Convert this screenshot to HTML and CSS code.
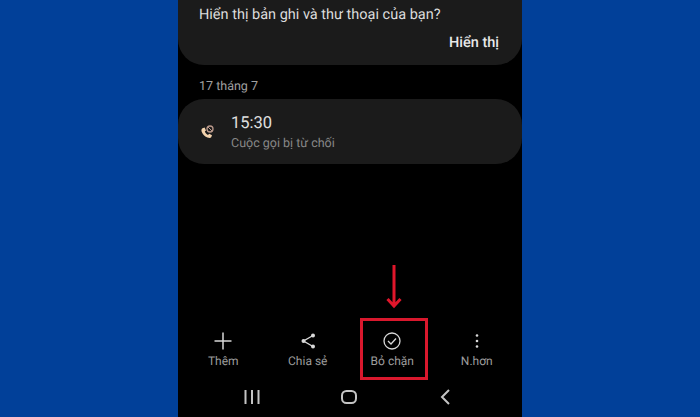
FILE: index.html
```html
<!DOCTYPE html>
<html>
	<head>
		<meta charset="UTF-8">
		<title></title>
		<link rel="stylesheet" href="styles.css">
	</head>
	<body>
		<div class="phone">
			<div class="card prompt">
				<p class="question">Hiển thị bản ghi và thư thoại của bạn?</p>
				<p class="action">Hiển thị</p>
			</div>
			<p class="date">17 tháng 7</p>
			<div class="card call">
				<svg class="call-icon" width="18" height="18" viewBox="0 0 18 18">
					<path d="M4.500 5.200 6.600 4.400 8 7.400 6.800 8.600C7.400 10.200 8.400 11.200 10 11.900L11.200 10.700 14 12.200 13.200 14.300C12.600 15.200 11 15.200 9.400 14.500 6.400 13.200 4.400 11 3.600 8.400 3.200 7 3.600 5.800 4.500 5.200Z" fill="#f3d3ad"/>
					<circle cx="12" cy="6" r="3" fill="none" stroke="#b9988a" stroke-width="1.300"/>
					<path d="M10 4 14 8" stroke="#b9988a" stroke-width="1"/>
				</svg>
				<div>
					<p class="time">15:30</p>
					<p class="status">Cuộc gọi bị từ chối</p>
				</div>
			</div>
			<div class="spacer"></div>
			<ul class="toolbar">
				<li>
					<svg width="24" height="24" viewBox="0 0 24 24"><path d="M12 3.500V20.500M3.500 12H20.500" stroke="#d8d8d8" stroke-width="1.500"/></svg>
					<span>Thêm</span>
				</li>
				<li>
					<svg width="24" height="24" viewBox="0 0 24 24">
						<path d="M17 6.500 7.500 12 17 17.500" fill="none" stroke="#d8d8d8" stroke-width="1.400"/>
						<circle cx="17" cy="6.500" r="2" fill="#d8d8d8"/>
						<circle cx="7.500" cy="12" r="2" fill="#d8d8d8"/>
						<circle cx="17" cy="17.500" r="2" fill="#d8d8d8"/>
					</svg>
					<span>Chia sẻ</span>
				</li>
				<li>
					<svg width="24" height="24" viewBox="0 0 24 24">
						<circle cx="12" cy="12" r="8" fill="none" stroke="#d8d8d8" stroke-width="1.300"/>
						<path d="M8 12 11 15 16 9.500" fill="none" stroke="#d8d8d8" stroke-width="1.300"/>
					</svg>
					<span>Bỏ chặn</span>
				</li>
				<li>
					<svg width="24" height="24" viewBox="0 0 24 24">
						<circle cx="12" cy="6.500" r="1.300" fill="#d8d8d8"/>
						<circle cx="12" cy="12" r="1.300" fill="#d8d8d8"/>
						<circle cx="12" cy="17.500" r="1.300" fill="#d8d8d8"/>
					</svg>
					<span>N.hơn</span>
				</li>
			</ul>
			<div class="navbar">
				<svg width="18" height="16" viewBox="0 0 18 16"><path d="M2.500 1V15M9 1V15M15.500 1V15" stroke="#c4c4c4" stroke-width="2"/></svg>
				<svg width="18" height="16" viewBox="0 0 18 16"><rect x="2" y="2" width="14" height="12" rx="4.500" fill="none" stroke="#c4c4c4" stroke-width="2"/></svg>
				<svg width="18" height="16" viewBox="0 0 18 16"><path d="M12 1 5 8 12 15" fill="none" stroke="#c4c4c4" stroke-width="2"/></svg>
			</div>
			<div class="red-box"></div>
			<svg class="red-arrow" width="16" height="44" viewBox="0 0 16 44">
				<path d="M8 0V41M1.500 34 8 41 14.500 34" fill="none" stroke="#e0162b" stroke-width="3"/>
			</svg>
		</div>
	</body>
</html>
```

FILE: styles.css
```css
*{
	margin: 0;
	padding: 0;
}
html,body{
	height: 417px;
	overflow: hidden;
}
body{
	background: #014099;
	font-family: "Roboto", "Liberation Sans", sans-serif;
	text-rendering: geometricPrecision;
	display: flex;
	justify-content: center;
}
li{
	list-style: none;
}
.phone{
	width: 344px;
	height: 417px;
	background: #000;
	position: relative;
	display: flex;
	flex-direction: column;
}
.card{
	background: #1b1b1b;
	border-radius: 26px;
}
.prompt{
	height: 65px;
	border-radius: 0 0 26px 26px;
	box-sizing: border-box;
	padding: 5px 23px 0 21px;
}
.question{
	font-size: 14.500px;
	line-height: 20px;
	color: #dcdcdc;
}
.action{
	font-size: 14.500px;
	line-height: 20px;
	margin-top: 8px;
	text-align: right;
	font-weight: 500;
	color: #e8e8e8;
}
.date{
	font-size: 12.500px;
	line-height: 16px;
	color: #a0a0a0;
	padding: 14px 0 4px 21px;
}
.call{
	height: 65px;
	display: flex;
	align-items: center;
	gap: 15px;
	padding-left: 20px;
}
.call-icon{
	flex: none;
}
.time{
	font-size: 16.500px;
	line-height: 20px;
	color: #e0e0e0;
	padding-top: 3px;
}
.status{
	font-size: 12.500px;
	line-height: 18px;
	color: #888;
	margin-top: 1px;
}
.spacer{
	flex: 1;
}
.toolbar{
	display: grid;
	grid-template-columns: repeat(4, 84.500px);
	padding: 0 3px;
}
.toolbar li{
	display: flex;
	flex-direction: column;
	align-items: center;
	font-size: 12px;
	line-height: 16px;
	color: #9c9c9c;
	gap: 0;
}
.navbar{
	height: 37px;
	margin: 9px 0 2px;
	padding-right: 2px;
	display: flex;
	justify-content: center;
	align-items: center;
	gap: 79px;
}
.red-box{
	position: absolute;
	left: 182px;
	top: 318px;
	width: 62px;
	height: 56px;
	border: 3px solid #d9182d;
}
.red-arrow{
	position: absolute;
	left: 208px;
	top: 265px;
}
```
